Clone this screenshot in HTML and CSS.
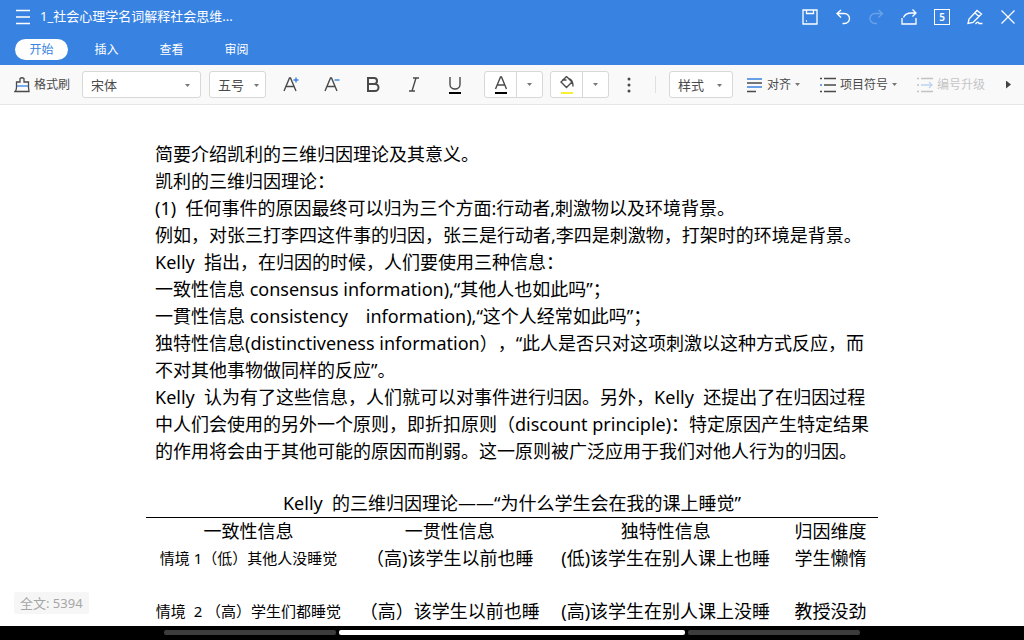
FILE: index.html
```html
<!DOCTYPE html>
<html lang="zh-CN">
<head>
<meta charset="utf-8">
<meta name="viewport" content="width=device-width, initial-scale=1">
<title>1_社会心理学名词解释社会思维</title>
<link rel="stylesheet" href="styles.css">
</head>
<body>
<header class="header">
  <div class="titlebar">
    <button class="icon-btn" aria-label="菜单"><svg viewBox="0 0 16 16"><path d="M1 1.500h14M1 8h14M1 14.500h14"/></svg></button>
    <h1 class="title">1_社会心理学名词解释社会思维...</h1>
    <div class="actions">
      <button class="icon-btn" aria-label="保存"><svg viewBox="0 0 16 16"><path d="M1 1h14v14H1zM4.500 1v3.500h7V1M4 12h1"/></svg></button>
      <button class="icon-btn" aria-label="撤销"><svg viewBox="0 0 16 16"><path d="M6 1L2 4.500l4 4M2 4.500h7.500a5 5 0 0 1 0 10H7.500"/></svg></button>
      <button class="icon-btn" aria-label="重做" disabled><svg viewBox="0 0 16 16"><path d="M10.500 1l4 3.500-4 4M14.500 4.500H7a5 5 0 0 0 0 10h2"/></svg></button>
      <button class="icon-btn" aria-label="分享"><svg viewBox="0 0 16 16"><path d="M11.500 .5L15 4l-3.500 3.500M15 4h-4.500C6 4 3.500 6 2.500 8.500M1 9v6h14V9"/></svg></button>
      <button class="icon-btn page-btn" aria-label="页面">5</button>
      <button class="icon-btn" aria-label="编辑"><svg viewBox="0 0 16 16"><path d="M1 14.500L2 10 10 1.500l4.500 3.500-8.500 8.500zM8 4l4 3.500M8.500 15c2-2.500 3-2.500 3.500-.5h3.500"/></svg></button>
      <button class="icon-btn" aria-label="关闭"><svg viewBox="0 0 16 16"><path d="M1.500 1.500l13 13M14.500 1.500l-13 13"/></svg></button>
    </div>
  </div>
  <nav class="tabs">
    <button class="tab tab-active">开始</button>
    <button class="tab">插入</button>
    <button class="tab">查看</button>
    <button class="tab">审阅</button>
  </nav>
</header>

<div class="toolbar" role="toolbar" aria-label="格式">
  <button class="tool"><svg class="ico" viewBox="0 0 16 16"><path d="M6 5V1.500Q8 0 10 1.500V5h4.500v5.500l.5 4H1c1-1 1.500-2 1.500-4V5z"/><path class="blue" d="M3 9h11"/></svg>格式刷</button>
  <label class="picker picker-font"><select aria-label="字体"><option>宋体</option></select><i class="caret"></i></label>
  <label class="picker picker-size"><select aria-label="字号"><option>五号</option></select><i class="caret"></i></label>
  <div class="marks">
    <button class="mark" aria-label="增大字号"><svg viewBox="0 0 18 20"><path d="M2 16L7.500 3h1L14 16M4 11.500h8"/><path class="blue" d="M11.500 5h5M14 2.500v5"/></svg></button>
    <button class="mark" aria-label="减小字号"><svg viewBox="0 0 18 20"><path d="M2 16L7.500 3h1L14 16M4 11.500h8"/><path class="blue" d="M11.500 5h5"/></svg></button>
    <button class="mark" aria-label="加粗"><svg viewBox="0 0 18 20"><path class="bold" d="M4 3h6a3 3 0 0 1 0 6H4zM4 9h7a3.500 3.500 0 0 1 0 7H4z"/></svg></button>
    <button class="mark" aria-label="斜体"><svg viewBox="0 0 18 20"><path d="M8 3h6M4 16h6M11 3L7 16"/></svg></button>
    <button class="mark" aria-label="下划线"><svg viewBox="0 0 18 20"><path d="M4 2v7.500a5 4.500 0 0 0 10 0V2"/><path class="black" d="M3 18h12"/></svg></button>
  </div>
  <div class="split">
    <button class="split-main" aria-label="字体颜色"><svg viewBox="0 0 18 20"><path d="M3.500 14L8.500 2h1L14.500 14M5.500 10h7"/><path class="black" d="M3 18h12"/></svg></button>
    <button class="split-more" aria-label="更多字体颜色"><i class="caret"></i></button>
  </div>
  <div class="split">
    <button class="split-main" aria-label="填充颜色"><svg viewBox="0 0 18 20"><path d="M8.500 1.500L14 7 8.500 12.500 3 7 8.500 1.500M4 5h4.500M10.500 3.500C13 4 15 6 15 11.500"/><path class="yellow" d="M3 18h12"/></svg></button>
    <button class="split-more" aria-label="更多填充颜色"><i class="caret"></i></button>
  </div>
  <button class="more" aria-label="更多"><svg viewBox="0 0 4 18"><circle cx="2" cy="3" r="1.500"/><circle cx="2" cy="9" r="1.500"/><circle cx="2" cy="15" r="1.500"/></svg></button>
  <span class="divider"></span>
  <label class="picker picker-style"><select aria-label="样式"><option>样式</option></select><i class="caret"></i></label>
  <button class="tool"><svg class="ico" viewBox="0 0 16 16"><path d="M0 6h15M0 14.500h9"/><path class="blue" d="M0 2h15M0 10h15"/></svg>对齐<i class="caret"></i></button>
  <button class="tool tool-list"><svg class="ico" viewBox="0 0 16 16"><path d="M4 1.500h12M4 8h12M4 14.500h12M0 1.500h2M0 14.500h2"/><path class="blue" d="M0 8h2"/></svg>项目符号<i class="caret"></i></button>
  <button class="tool tool-level" disabled><svg class="ico" viewBox="0 0 16 16"><path d="M4 1.500h12M4 14.500h12M0 1.500h2M0 8h2M0 14.500h2"/><path class="blue" d="M4 8h11M12 5l3 3-3 3"/></svg>编号升级</button>
  <button class="next" aria-label="下一组"></button>
</div>

<main class="document">
  <article class="page">
    <p>简要介绍凯利的三维归因理论及其意义。</p>
    <p>凯利的三维归因理论：</p>
    <p>(1)  任何事件的原因最终可以归为三个方面:行动者,刺激物以及环境背景。</p>
    <p>例如，对张三打李四这件事的归因，张三是行动者,李四是刺激物，打架时的环境是背景。</p>
    <p>Kelly  指出，在归因的时候，人们要使用三种信息：</p>
    <p>一致性信息 consensus information),“其他人也如此吗”；</p>
    <p>一貫性信息 consistency　information),“这个人经常如此吗”；</p>
    <p>独特性信息(distinctiveness information），“此人是否只对这项刺激以这种方式反应，而<br>不对其他事物做同样的反应”。</p>
    <p>Kelly  认为有了这些信息，人们就可以对事件进行归因。另外，Kelly  还提出了在归因过程<br>中人们会使用的另外一个原则，即折扣原则（discount principle)：特定原因产生特定结果<br>的作用将会由于其他可能的原因而削弱。这一原则被广泛应用于我们对他人行为的归因。</p>
    <table class="grid">
      <caption>Kelly  的三维归因理论——“为什么学生会在我的课上睡觉”</caption>
      <colgroup><col class="c1"><col class="c2"><col class="c3"><col class="c4"></colgroup>
      <thead>
        <tr><th>一致性信息</th><th>一贯性信息</th><th>独特性信息</th><th>归因维度</th></tr>
      </thead>
      <tbody>
        <tr class="tall"><td class="small">情境 1（低）其他人没睡觉</td><td>（高)该学生以前也睡</td><td>(低)该学生在别人课上也睡</td><td>学生懒惰</td></tr>
        <tr><td class="small">情境  2 （高）学生们都睡觉</td><td>（高）该学生以前也睡</td><td>(高)该学生在别人课上没睡</td><td>教授没劲</td></tr>
      </tbody>
    </table>
  </article>
  <div class="count">全文: 5394</div>
</main>

<footer class="sysbar"><span></span><span class="current"></span><span></span></footer>
</body>
</html>
```

FILE: styles.css
```css
* {
  box-sizing: border-box;
}

body {
  margin: 0;
  height: 100vh;
  display: flex;
  flex-direction: column;
  overflow: hidden;
  background: #fff;
  color: #000;
  font-family: "Noto Sans", "Noto Sans CJK SC", sans-serif;
}

button,
select {
  margin: 0;
  padding: 0;
  border: 0;
  background: none;
  color: inherit;
  font: inherit;
}

svg {
  display: block;
  fill: none;
  stroke: currentColor;
}

/* Header */
.header {
  flex: none;
  padding: 8px 8px 5px 15px;
  background: #3883e2;
  color: #fff;
}

.titlebar {
  display: flex;
  align-items: center;
  height: 17px;
}

.icon-btn {
  flex: none;
  width: 16px;
  height: 16px;
}

.icon-btn svg {
  width: 16px;
  height: 16px;
  stroke-width: 1.3;
}

.icon-btn:disabled {
  opacity: 0.25;
}

.page-btn {
  border: 1px solid #fff;
  font-size: 10px;
  font-weight: 600;
  line-height: 14px;
}

.title {
  margin: 0 auto 0 9px;
  font-size: 13px;
  font-weight: 400;
  line-height: 17px;
  white-space: nowrap;
}

.actions {
  display: flex;
  gap: 17px;
}

.tabs {
  display: flex;
  gap: 12px;
  margin-top: 14px;
}

.tab {
  width: 53px;
  height: 21px;
  border-radius: 11px;
  font-size: 12px;
  line-height: 21px;
}

.tab-active {
  background: #fff;
  color: #3883e2;
}

/* Toolbar */
.toolbar {
  flex: none;
  display: flex;
  align-items: center;
  height: 40px;
  padding: 0 13px 0 14px;
  border-bottom: 1px solid #e6e6e6;
  background: #f9f9f9;
  color: #4a4a4a;
}

.tool {
  flex: none;
  display: flex;
  align-items: center;
  gap: 4px;
  font-size: 12px;
  line-height: 20px;
  white-space: nowrap;
}

.tool:disabled {
  opacity: 0.3;
}

.ico {
  width: 16px;
  height: 16px;
  stroke-width: 1.3;
}

.blue {
  stroke: #3883e2;
}

.black {
  stroke: #000;
  stroke-width: 2;
}

.yellow {
  stroke: #f8f032;
  stroke-width: 2;
}

.bold {
  stroke-width: 2;
}

.caret {
  width: 5px;
  height: 3px;
  background: #777;
  clip-path: polygon(0 0, 100% 0, 50% 100%);
}

.picker {
  flex: none;
  position: relative;
  height: 27px;
  border: 1px solid #d8d8d8;
  border-radius: 3px;
  background: #fff;
}

.picker select {
  width: 100%;
  height: 25px;
  padding-left: 8px;
  appearance: none;
  font-size: 13px;
}

.picker .caret {
  position: absolute;
  right: 10px;
  top: 12px;
}

.picker-font {
  width: 119px;
  margin-left: 12px;
}

.picker-size {
  width: 57px;
  margin-left: 8px;
}

.picker-size .caret {
  right: 6px;
}

.picker-style {
  width: 64px;
  margin: 0 14px 0 13px;
}

.marks {
  flex: none;
  display: flex;
  margin: 0 9px 0 4px;
}

.mark {
  display: grid;
  place-items: center;
  width: 41px;
  height: 27px;
}

.mark svg,
.split-main svg {
  width: 18px;
  height: 20px;
  stroke-width: 1.4;
}

.split {
  flex: none;
  display: flex;
  width: 59px;
  height: 27px;
  margin-right: 7px;
  border: 1px solid #d8d8d8;
  border-radius: 3px;
  background: #fff;
}

.split button {
  display: grid;
  place-items: center;
}

.split-main {
  flex: 1;
}

.split .split-more {
  width: 26px;
  border-left: 1px solid #d8d8d8;
}

.more {
  flex: none;
  width: 26px;
  height: 27px;
  margin-right: 13px;
}

.more svg {
  width: 4px;
  height: 18px;
  margin: 0 auto;
  fill: currentColor;
  stroke: none;
}

.divider {
  flex: none;
  width: 1px;
  height: 17px;
  background: #e0e0e0;
}

.tool-list,
.tool-level {
  margin-left: 20px;
}

.next {
  flex: none;
  width: 5px;
  height: 8px;
  margin-left: auto;
  background: #444;
  clip-path: polygon(0 0, 100% 50%, 0 100%);
}

/* Document */
.document {
  flex: 1;
  position: relative;
  min-height: 0;
  overflow: hidden;
  padding: 36px 16px 0;
}

.page {
  max-width: 732px;
  margin: 0 auto;
  font-size: 18px;
  line-height: 27px;
  text-spacing-trim: space-all;
}

.page p {
  margin: 0;
  padding-left: 9px;
  white-space: pre;
}

.grid {
  width: 100%;
  margin-top: 25px;
  border-collapse: collapse;
  table-layout: fixed;
}

.grid caption {
  border-bottom: 1px solid #000;
  white-space: pre;
}

.grid th,
.grid td {
  padding: 0;
  font-weight: 400;
  text-align: center;
  vertical-align: top;
  white-space: pre;
}

.grid .small {
  font-size: 15px;
}

.tall {
  height: 53px;
}

.c1 {
  width: 28%;
}

.c2 {
  width: 27%;
}

.c3 {
  width: 32%;
}

.c4 {
  width: 13%;
}

.count {
  position: absolute;
  left: 14px;
  bottom: 12px;
  padding: 0 6px;
  border-radius: 2px;
  background: #f6f6f6;
  color: #a6a6a6;
  font-size: 13px;
  line-height: 22px;
}

/* System bar */
.sysbar {
  flex: none;
  display: grid;
  grid-template-columns: 1fr 2fr 1fr;
  gap: 3px;
  height: 14px;
  padding: 4px 16% 5px;
  background: #000;
}

.sysbar span {
  border-radius: 2px;
  background: #3c3c3c;
}

.sysbar .current {
  background: #fff;
}
```
